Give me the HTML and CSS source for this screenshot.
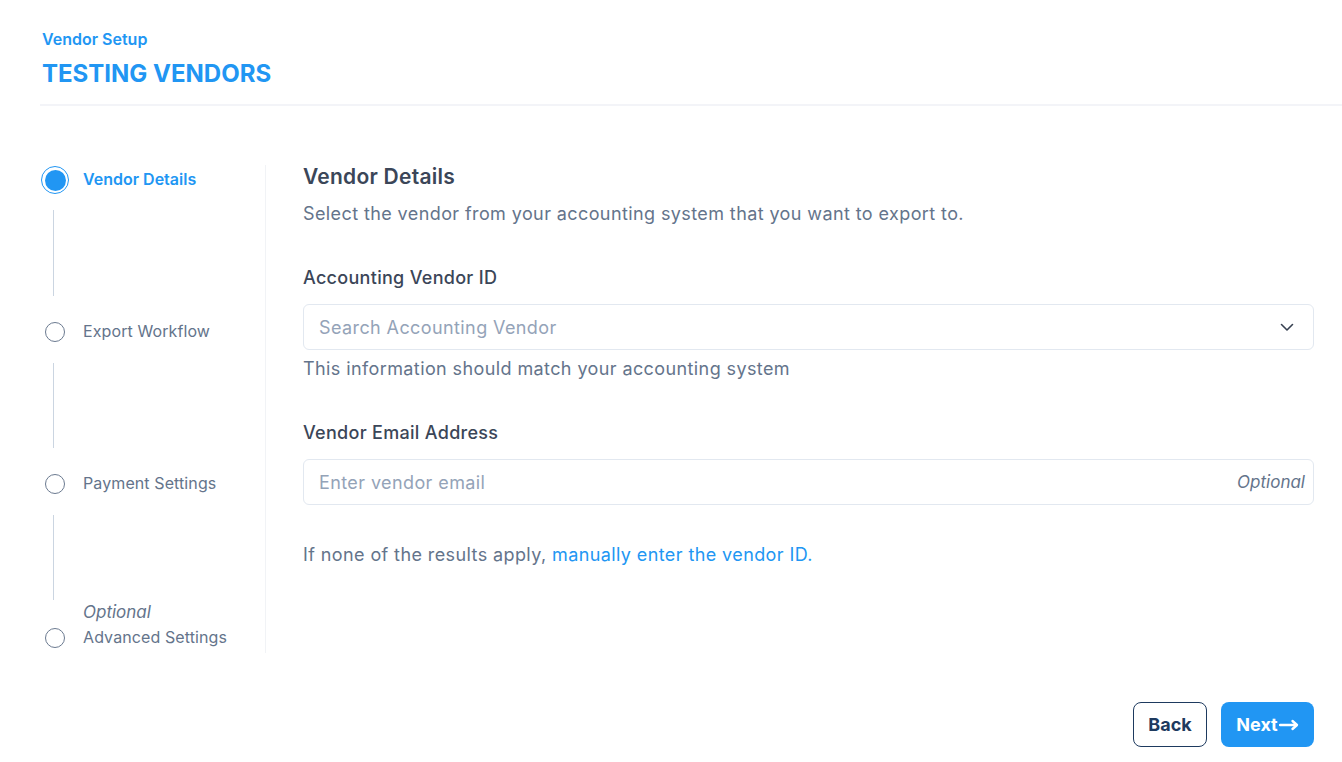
FILE: index.html
```html
<!DOCTYPE html>
<html lang="en">
<head>
<meta charset="utf-8">
<title>Vendor Setup</title>
<link rel="stylesheet" href="styles.css">
</head>
<body>
<div class="page">
  <header class="header">
    <div class="eyebrow">Vendor Setup</div>
    <h1 class="title">TESTING VENDORS</h1>
  </header>
  <div class="divider"></div>
  <main class="main">
    <nav class="stepper">
      <div class="step active">
        <span class="dot"><span class="dot-inner"></span></span>
        <span class="step-label">Vendor Details</span>
      </div>
      <div class="connector c1"></div>
      <div class="step">
        <span class="dot"></span>
        <span class="step-label">Export Workflow</span>
      </div>
      <div class="connector c2"></div>
      <div class="step">
        <span class="dot"></span>
        <span class="step-label">Payment Settings</span>
      </div>
      <div class="connector c3"></div>
      <div class="step last">
        <span class="dot"></span>
        <span class="step-text">
          <span class="step-optional">Optional</span>
          <span class="step-label">Advanced Settings</span>
        </span>
      </div>
    </nav>
    <section class="content">
      <h2 class="heading">Vendor Details</h2>
      <p class="subtitle">Select the vendor from your accounting system that you want to export to.</p>
      <label class="label first">Accounting Vendor ID</label>
      <div class="field">
        <span class="placeholder">Search Accounting Vendor</span>
        <svg class="chevron" width="18" height="18" viewBox="0 0 18 18" fill="none"><path d="M3.5 6.5 L9 12 L14.5 6.5" stroke="#374151" stroke-width="1.6" stroke-linecap="round" stroke-linejoin="round"/></svg>
      </div>
      <p class="help">This information should match your accounting system</p>
      <label class="label second">Vendor Email Address</label>
      <div class="field">
        <span class="placeholder">Enter vendor email</span>
        <span class="optional-tag">Optional</span>
      </div>
      <p class="note">If none of the results apply, <a class="link" href="#">manually enter the vendor ID.</a></p>
    </section>
  </main>
  <footer class="footer">
    <button class="btn btn-back">Back</button>
    <button class="btn btn-next">Next<svg class="arrow" width="20" height="12" viewBox="0 0 20 12" fill="none"><path d="M1 6 H17" stroke="#fff" stroke-width="2.4" stroke-linecap="round"/><path d="M13.5 2 L18 6 L13.5 10" stroke="#fff" stroke-width="2.4" stroke-linecap="round" stroke-linejoin="round"/></svg></button>
  </footer>
</div>
</body>
</html>
```
FILE: styles.css
```css
* { box-sizing: border-box; }
html, body { margin: 0; padding: 0; background: #fff; }
body {
  font-family: Inter, "Noto Sans", "Liberation Sans", sans-serif;
  color: #374151;
  width: 1342px;
  height: 762px;
  overflow: hidden;
}
.page { width: 1342px; }
.header { padding: 29px 0 0 42px; }
.eyebrow {
  font-size: 16px;
  font-weight: 600;
  color: #2196f3;
  line-height: 20px;
}
.title {
  margin: 11px 0 0 0;
  font-size: 24px;
  font-weight: 700;
  color: #2196f3;
  line-height: 28px;
}
.divider {
  margin: 16px 0 0 40px;
  height: 2px;
  background: #f3f4f8;
}
.main {
  display: flex;
  padding: 59px 28px 0 40px;
}
.stepper {
  width: 226px;
  flex: none;
  border-right: 1px solid #f1f3f6;
  display: flex;
  flex-direction: column;
  height: 488px;
}
.step {
  display: flex;
  align-items: center;
  height: 30px;
}
.dot {
  width: 20px;
  height: 20px;
  border-radius: 50%;
  border: 1.5px solid #6b7a90;
  margin-left: 5px;
  margin-right: 18px;
  flex: none;
  display: flex;
  align-items: center;
  justify-content: center;
  background: #fff;
}
.step.active .dot {
  width: 28px;
  height: 28px;
  margin-left: 1px;
  margin-right: 14px;
  border: 1.5px solid #2196f3;
}
.dot-inner {
  width: 21px;
  height: 21px;
  border-radius: 50%;
  background: #2196f3;
}
.step-label {
  font-size: 16px;
  letter-spacing: 0.1px;
  color: #64748b;
  line-height: 28px;
  padding-bottom: 2px;
  white-space: nowrap;
}
.step.active .step-label {
  color: #2196f3;
  font-weight: 600;
  letter-spacing: 0;
}
.connector {
  width: 1px;
  background: #cbd5e1;
  margin-left: 13px;
}
.c1 { margin-top: 15px; height: 86px; margin-bottom: 21px; }
.c2 { margin-top: 16px; height: 86px; margin-bottom: 21px; }
.c3 { margin-top: 16px; height: 85px; margin-bottom: 1px; }
.step.last {
  height: auto;
  align-items: flex-end;
}
.step.last .dot { margin-bottom: 5px; }
.step-text {
  display: flex;
  flex-direction: column;
}
.step-optional {
  font-size: 17px;
  font-style: italic;
  color: #64748b;
  line-height: 22px;
}
.content {
  flex: 1;
  padding-left: 37px;
}
.heading {
  margin: -2px 0 0 0;
  font-size: 21px;
  font-weight: 600;
  line-height: 28px;
  letter-spacing: 0.25px;
  color: #3b4658;
}
.subtitle, .help, .note, .label, .placeholder {
  font-size: 18px;
  letter-spacing: 0.4px;
}
.subtitle {
  margin: 10px 0 0 0;
  line-height: 26px;
  color: #64748b;
}
.label {
  display: block;
  line-height: 26px;
  color: #3b4658;
  font-weight: 500;
  letter-spacing: 0.3px;
}
.label.first { margin-top: 38px; }
.label.second { margin-top: 38px; }
.field {
  margin-top: 13px;
  height: 46px;
  border: 1px solid #e2e8f0;
  border-radius: 6px;
  display: flex;
  align-items: center;
  justify-content: space-between;
  padding: 0 8px 0 15px;
}
.placeholder {
  color: #94a3b8;
}
.chevron { margin-right: 9px; }
.optional-tag {
  font-size: 17px;
  font-style: italic;
  color: #64748b;
}
.help {
  margin: 6px 0 0 0;
  line-height: 26px;
  color: #64748b;
}
.note {
  margin: 37px 0 0 0;
  line-height: 26px;
  color: #64748b;
}
.link { color: #2196f3; text-decoration: none; }
.footer {
  display: flex;
  justify-content: flex-end;
  gap: 14px;
  padding: 49px 28px 0 0;
}
.btn {
  font-family: Inter, "Noto Sans", "Liberation Sans", sans-serif;
  font-size: 18px;
  font-weight: 700;
  height: 45px;
  border-radius: 8px;
  display: flex;
  align-items: center;
  justify-content: center;
  cursor: pointer;
}
.btn-back {
  width: 74px;
  background: #fff;
  border: 1.5px solid #1e3a5f;
  color: #1e3a5f;
}
.btn-next {
  width: 93px;
  background: #2196f3;
  border: none;
  color: #fff;
  gap: 1px;
}
.arrow { margin-top: 1px; }
```
